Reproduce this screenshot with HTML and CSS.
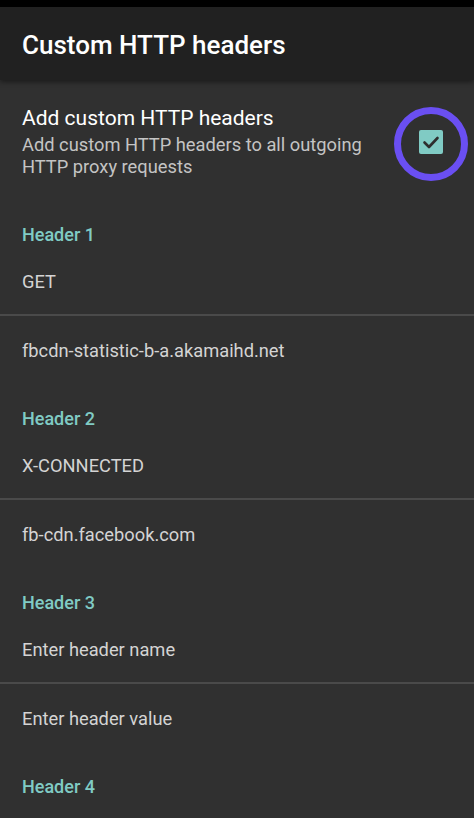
FILE: index.html
```html
<!DOCTYPE html>
<html lang="en">
<head>
<meta charset="UTF-8">
<meta name="viewport" content="width=device-width, initial-scale=1.0">
<title>Custom HTTP headers</title>
<link rel="stylesheet" href="styles.css">
</head>
<body>
<div class="statusbar"></div>
<div class="toolbar">
    <h1>Custom HTTP headers</h1>
</div>
<div class="prefs">
    <div class="pref-switch">
        <div class="pref-text">
            <div class="pref-title">Add custom HTTP headers</div>
            <div class="pref-summary">Add custom HTTP headers to all outgoing HTTP proxy requests</div>
        </div>
        <div class="pref-widget">
            <svg class="checkbox" width="24" height="24" viewBox="0 0 24 24">
                <rect x="0" y="0" width="24" height="24" rx="2" fill="#80cbc4"/>
                <path d="M5.5 12.5 L10 17 L18.5 8" fill="none" stroke="#2e2e2e" stroke-width="2.6" stroke-linecap="round" stroke-linejoin="round"/>
            </svg>
            <div class="ring"></div>
        </div>
    </div>

    <div class="cat">Header 1</div>
    <div class="item">GET</div>
    <div class="divider"></div>
    <div class="item">fbcdn-statistic-b-a.akamaihd.net</div>

    <div class="cat">Header 2</div>
    <div class="item">X-CONNECTED</div>
    <div class="divider"></div>
    <div class="item">fb-cdn.facebook.com</div>

    <div class="cat">Header 3</div>
    <div class="item">Enter header name</div>
    <div class="divider"></div>
    <div class="item">Enter header value</div>

    <div class="cat">Header 4</div>
</div>
</body>
</html>
```

FILE: styles.css
```css
body {
    margin: 0;
    background-color: #303030;
    font-family: Roboto, "Noto Sans", sans-serif;
    height: 818px;
    overflow: hidden;
}
.statusbar {
    height: 7px;
    background-color: #000;
}
.toolbar {
    height: 73px;
    background-color: #212121;
    display: flex;
    align-items: center;
    padding: 0 22px;
    box-shadow: 0 2px 5px rgba(0, 0, 0, 0.45);
    position: relative;
    z-index: 1;
}
.toolbar h1 {
    margin: 0;
    margin-top: 3px;
    font-size: 26px;
    font-weight: 500;
    color: #fff;
}
.pref-switch {
    display: flex;
    align-items: center;
    padding: 25px 0 21px 22px;
}
.pref-text {
    flex: 1;
}
.pref-title {
    font-size: 21px;
    line-height: 26px;
    color: #fff;
}
.pref-summary {
    margin-top: 3px;
    font-size: 18.3px;
    line-height: 22px;
    color: #c4c4c4;
    padding-right: 10px;
}
.pref-widget {
    width: 84px;
    display: flex;
    justify-content: center;
    position: relative;
}
.checkbox {
    display: block;
    margin-left: -2px;
}
.ring {
    position: absolute;
    left: 50%;
    top: 50%;
    width: 60px;
    height: 60px;
    margin-left: -38px;
    margin-top: -35px;
    border: 7px solid #6a4ff2;
    border-radius: 50%;
}
.cat {
    padding: 24px 22px 0;
    font-size: 18px;
    line-height: 24px;
    font-weight: 500;
    color: #80cbc4;
}
.item {
    padding: 23px 22px 20px;
    font-size: 18.3px;
    line-height: 24px;
    color: #d4d4d4;
}
.divider {
    height: 2px;
    background-color: #4a4a4a;
}
```
